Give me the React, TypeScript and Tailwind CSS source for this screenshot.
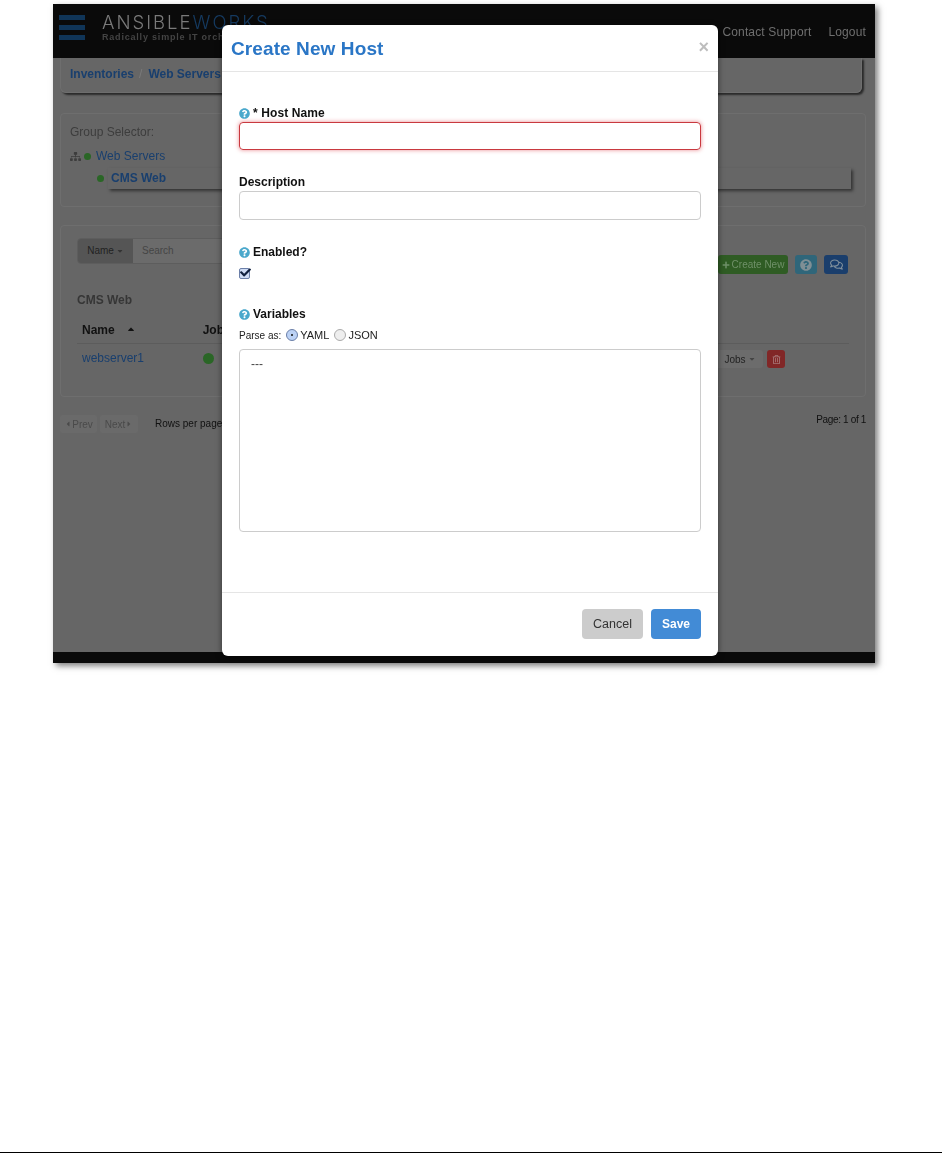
import { FaQuestionCircle, FaSitemap, FaRegTrashAlt, FaRegComments, FaPlus, FaCaretDown, FaCaretLeft, FaCaretRight, FaCaretUp, FaCheck } from "react-icons/fa";

function HelpIcon() {
  return <FaQuestionCircle className="text-[11px] text-[#4aa8cc]" />;
}

function Dot({ className = "" }: { className?: string }) {
  return <span className={`inline-block rounded-full bg-[#2a6626] ${className}`} />;
}

function Header() {
  return (
    <div className="flex h-[54px] shrink-0 items-start bg-[#0a0a0a] pl-[6px] pr-[9px]">
      <div className="mt-[11px] flex w-[26px] flex-col gap-[5px]">
        <span className="h-[5px] bg-[#103558]" />
        <span className="h-[5px] bg-[#103558]" />
        <span className="h-[5px] bg-[#103558]" />
      </div>
      <div className="ml-[17px] mt-[7px]">
        <div className="font-['Inter'] text-[18.5px] font-light leading-[22px] tracking-[2px] text-[#7a7a7a]">
          ANSIBLE<span className="text-[#153a60]">WORKS</span>
        </div>
        <div className="mt-[1px] text-[9px] font-bold leading-[7px] tracking-[0.8px] text-[#444]">Radically simple IT orch</div>
      </div>
      <div className="ml-auto mt-[20px] flex gap-[17px] text-[12px] leading-[16px] tracking-[0.15px] text-[#6f6f6f]">
        <span>Contact Support</span>
        <span>Logout</span>
      </div>
    </div>
  );
}

function Background() {
  return (
    <div className="flex-1 px-[7px] pr-[9px]">
      <div className="mr-[4px] flex h-[35px] items-center rounded-b-[6px] border border-t-0 border-[#6e6e6e] pb-[2px] pl-[9px] text-[12px] font-bold text-[#193f6e] shadow-[2px_2px_2px_rgba(0,0,0,0.6)]">
        Inventories <span className="ml-[5px] mr-[6px] font-normal text-[#7a7a7a]">/</span> Web Servers
      </div>

      <div className="mt-[20px] h-[94px] rounded-[4px] border border-[#6e6e6e] pl-[9px] pr-[14px] pt-[9px] text-[12px]">
        <div className="leading-[18px] text-[#3d3d3d]">Group Selector:</div>
        <div className="mt-[7px] flex h-[16px] items-center text-[#193f6e]">
          <FaSitemap className="text-[11px] text-[#3d3d3d]" />
          <Dot className="ml-[3px] h-[7px] w-[7px]" />
          <span className="ml-[5px]">Web Servers</span>
        </div>
        <div className="ml-[27px] mt-[6px] flex h-[16px] items-center">
          <Dot className="h-[7px] w-[7px]" />
          <div className="ml-[4px] mt-[1px] flex h-[21px] flex-1 items-center pb-[1px] pl-[3px] font-bold text-[#193f6e] shadow-[2px_2px_3px_rgba(0,0,0,0.5)]">CMS Web</div>
        </div>
      </div>

      <div className="mt-[18px] h-[172px] rounded-[4px] border border-[#6e6e6e] px-[16px] pt-[12px] text-[12px]">
        <div className="flex items-start justify-between pr-[1px]">
          <div className="flex h-[26px] w-[180px] items-stretch overflow-hidden rounded-[4px] border border-[#5d5d5d] text-[10px]">
            <div className="flex w-[55px] items-center justify-center gap-[2px] bg-[#555] pb-[1px] text-[#222]">
              Name <FaCaretDown className="text-[8px] text-[#333]" />
            </div>
            <div className="flex flex-1 items-center bg-[#6b6b6b] pb-[1px] pl-[9px] text-[#454545]">Search</div>
          </div>
          <div className="mt-[17px] flex items-center gap-[7px]">
            <div className="flex h-[19px] w-[70px] items-center justify-center gap-[2px] rounded-[3px] bg-[#2f5c24] text-[10px] text-[#6f9068]">
              <FaPlus className="text-[8px]" /> Create New
            </div>
            <div className="flex h-[19px] w-[22px] items-center justify-center rounded-[3px] bg-[#2f667a] text-[#7f8f95]">
              <FaQuestionCircle className="text-[12px]" />
            </div>
            <div className="flex h-[19px] w-[24px] items-center justify-center rounded-[3px] bg-[#1a3e6c] text-[#7f8f9c]">
              <FaRegComments className="text-[13px]" />
            </div>
          </div>
        </div>
        <div className="mt-[18px] text-[12px] font-bold leading-[16px] text-[#363636]">CMS Web</div>
        <div className="mt-[12px] flex h-[24px] items-center border-b border-[#5c5c5c] pb-[3px] pl-[5px] font-bold text-[#111]">
          <span>Name</span>
          <FaCaretUp className="-mt-[2px] ml-[11px] text-[10px]" />
          <span className="ml-[67px]">Job</span>
        </div>
        <div className="flex h-[28px] items-center pl-[5px] pr-[64px] text-[12px] text-[#193f6e]">
          <span>webserver1</span>
          <Dot className="ml-[59px] h-[11px] w-[11px]" />
          <div className="ml-auto mt-[2px] flex items-center gap-[4px]">
            <div className="flex h-[18px] w-[46px] items-center justify-center gap-[2px] rounded-r-[3px] bg-[#6c6c6c] text-[10px] text-[#222]">
              Jobs <FaCaretDown className="text-[8px] text-[#444]" />
            </div>
            <div className="flex h-[18px] w-[18px] items-center justify-center rounded-[3px] bg-[#812727] text-[#a87878]">
              <FaRegTrashAlt className="text-[9px]" />
            </div>
          </div>
        </div>
      </div>

      <div className="mt-[18px] flex items-start text-[10px]">
        <div className="flex h-[18px] w-[37px] items-center justify-center rounded-[2px] bg-[#6a6a6a] text-[#4a4a4a]">
          <FaCaretLeft className="text-[8px]" />Prev
        </div>
        <div className="ml-[3px] flex h-[18px] w-[38px] items-center justify-center rounded-[2px] bg-[#6a6a6a] text-[#4a4a4a]">
          Next<FaCaretRight className="text-[8px]" />
        </div>
        <span className="ml-[17px] leading-[18px] text-[#111]">Rows per page:</span>
        <span className="ml-auto -mt-[4px] leading-[18px] tracking-[-0.35px] text-[#111]">Page: 1 of 1</span>
      </div>
    </div>
  );
}

function Modal() {
  return (
    <div className="absolute left-[169px] top-[21px] flex h-[631px] w-[496px] flex-col rounded-[6px] bg-white shadow-[0_2px_6px_rgba(0,0,0,0.5)]">
      <div className="flex h-[47px] shrink-0 items-center justify-between border-b border-[#e5e5e5] pl-[9px] pr-[9px]">
        <span className="pt-[2px] text-[19px] font-bold tracking-[0.1px] text-[#2a76c6]">Create New Host</span>
        <span className="-mt-[2px] text-[18px] font-bold leading-[18px] text-[#bdbdbd]">×</span>
      </div>

      <div className="flex-1 px-[17px] text-[12px]">
        <div className="mt-[32px] flex h-[18px] items-center gap-[3px] font-bold tracking-[0.1px] text-[#111]">
          <HelpIcon /> * Host Name
        </div>
        <div className="h-[28px] rounded-[4px] border border-[#c9393f] shadow-[0_0_4px_rgba(220,60,70,0.6)]" />

        <div className="mt-[23px] flex h-[18px] items-center font-bold text-[#111]">Description</div>
        <div className="h-[29px] rounded-[4px] border border-[#cccccc]" />

        <div className="mt-[23px] flex h-[18px] items-center gap-[3px] font-bold text-[#111]">
          <HelpIcon /> Enabled?
        </div>
        <div className="relative mt-[7px] h-[11px] w-[11px] rounded-[2px] border border-[#6b7fa8] bg-[#cfdcf5]">
          <FaCheck className="absolute -top-[2px] left-0 text-[11px] text-[#10203f]" />
        </div>

        <div className="mt-[26px] flex h-[18px] items-center gap-[3px] font-bold text-[#111]">
          <HelpIcon /> Variables
        </div>
        <div className="mt-[5px] flex h-[14px] items-center text-[10px] text-[#222]">
          <span>Parse as:</span>
          <span className="ml-[5px] flex h-[12px] w-[12px] items-center justify-center rounded-full border border-[#6b7fa8] bg-[#bcd2f5]">
            <span className="h-[2px] w-[2px] rounded-full bg-[#111]" />
          </span>
          <span className="ml-[2px] text-[11px]">YAML</span>
          <span className="ml-[5px] h-[12px] w-[12px] rounded-full border border-[#aaa] bg-[#eee]" />
          <span className="ml-[2px] text-[11px]">JSON</span>
        </div>
        <div className="mt-[7px] h-[183px] rounded-[4px] border border-[#cccccc] pl-[11px] pt-[5px] text-[12px] text-[#444]">---</div>
      </div>

      <div className="flex h-[64px] shrink-0 items-start justify-end gap-[8px] border-t border-[#e5e5e5] pr-[17px] pt-[16px] text-[12.5px]">
        <div className="flex h-[30px] w-[61px] items-center justify-center rounded-[4px] bg-[#cccccc] text-[#333]">Cancel</div>
        <div className="flex h-[30px] w-[50px] items-center justify-center rounded-[4px] bg-[#428bd6] text-[12px] font-bold text-white">Save</div>
      </div>
    </div>
  );
}

export default function App() {
  return (
    <div className="flex min-h-[1153px] flex-col bg-white font-['Liberation_Sans',Arial,sans-serif]">
      {/* the reference is a slightly soft screenshot, hence the small blur */}
      <div className="relative ml-[53px] mt-[4px] flex h-[659px] w-[822px] flex-col bg-[#666666] shadow-[3px_3px_6px_rgba(0,0,0,0.5)] blur-[0.35px]">
        <Header />
        <Background />
        <div className="h-[11px] shrink-0 bg-[#0a0a0a]" />
        <Modal />
      </div>
      <div className="mt-auto h-px bg-black" />
    </div>
  );
}
